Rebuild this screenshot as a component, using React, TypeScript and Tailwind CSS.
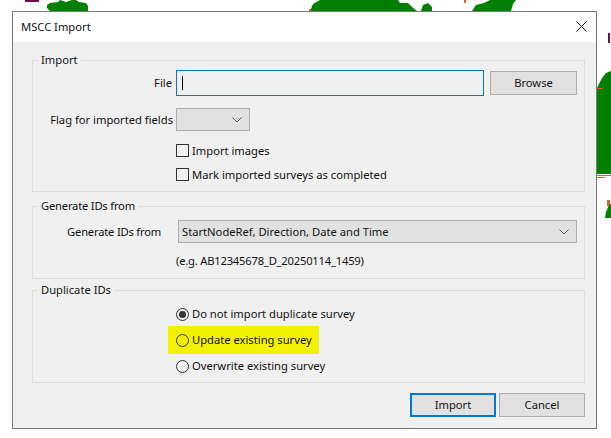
const fontStack = "font-['Noto_Sans','Open_Sans',sans-serif]";

function Chevron() {
  return (
    <svg width="10" height="6" viewBox="0 0 10 6" className="shrink-0">
      <polyline points="0.5,0.5 5,5 9.5,0.5" fill="none" stroke="#555555" strokeWidth="1" />
    </svg>
  );
}

function Checkbox({ label }: { label: string }) {
  return (
    <div className="flex h-[13px] items-center gap-[3px] pl-[143px]">
      <div className="h-[13px] w-[13px] border border-[#333333] bg-[#f0f0f0]" />
      <span>{label}</span>
    </div>
  );
}

function Radio({ label, checked }: { label: string; checked?: boolean }) {
  return (
    <div className="flex items-center gap-[3px] whitespace-nowrap">
      <div className="flex h-[13px] w-[13px] items-center justify-center rounded-full border border-[#333333]">
        {checked && <div className="h-[7px] w-[7px] rounded-full bg-[#333333]" />}
      </div>
      <span>{label}</span>
    </div>
  );
}

function Button({ label, primary, width }: { label: string; primary?: boolean; width: string }) {
  return (
    <button
      type="button"
      className={`h-[24px] bg-[#e1e1e1] text-[11.2px] text-[#111111] ${width} ${
        primary ? "border-2 border-[#0078d7]" : "border border-[#adadad]"
      }`}
    >
      {label}
    </button>
  );
}

function Group({ title, children, className }: { title: string; children: React.ReactNode; className: string }) {
  return (
    <fieldset className={`border border-[#dcdcdc] ${className}`}>
      <legend className="ml-[5px] px-[3px] leading-[16px]">{title}</legend>
      {children}
    </fieldset>
  );
}

export default function App() {
  return (
    <div className={`relative h-[438px] w-[611px] overflow-hidden bg-white pl-[12px] pt-[11px] text-[11.2px] leading-[16px] text-[#111111] ${fontStack}`}>
      {/* map behind the dialog */}
      <svg width="611" height="438" viewBox="0 0 611 438" className="absolute left-0 top-0">
        <rect x="25" y="0" width="14" height="2" fill="#7a0a4a" />
        <path d="M47 5 L50 3 L58 2 L60 0 L66 2 L72 0 L76 0 L79 2 L86 3 L88 6 L88 11 L50 11 L47 8 Z" fill="#008000" />
        <path d="M310 11 L313 4 L320 0 L398 0 L400 3 L408 3 L412 7 L417 11 Z" fill="#008000" />
        <path d="M421 11 L423 5 L428 3 L432 7 L432 11 Z" fill="#008000" />
        <path d="M472 11 L476 5 L484 3 L490 0 L516 0 L513 4 L511 11 Z" fill="#008000" />
        <path d="M464 0 h2 v3 h-2 Z M309 9 h2 v2 h-2 Z" fill="#e06020" />
        <path d="M608 33 h2 v10 h-2 Z" fill="#7a0a4a" />
        <path d="M597 88 L602 78 L606 73 L611 71 L611 174 L597 174 Z" fill="#008000" />
        <path d="M597 175 h14 v1 h-14 Z M597 177 h8 v1 h-8 Z" fill="#e06020" />
        <path d="M597 88 h6 v1 h-6 Z M607 200 h3 v6 h-3 Z" fill="#e06020" />
        <path d="M605 218 L606 212 L609 205 L611 204 L611 218 Z" fill="#008000" />
      </svg>

      <div className="relative flex h-[418px] w-[585px] flex-col border border-[#7a7a7a] bg-white">
        <div className="flex h-[30px] shrink-0 items-center justify-between pl-[8px] pr-[9px]">
          <span>MSCC Import</span>
          <svg width="11" height="11" viewBox="0 0 11 11" className="mb-px">
            <path d="M0.5 0.5 L10.5 10.5 M10.5 0.5 L0.5 10.5" stroke="#111111" strokeWidth="1" fill="none" />
          </svg>
        </div>

        <div className="flex flex-1 flex-col bg-[#f0f0f0] pl-[19px] pr-[11px] pt-[10px]">
          <Group title="Import" className="h-[140px]">
            <div className="mt-[2px] flex items-center">
              <div className="w-[139px] text-right">File</div>
              <div className="ml-[4px] flex h-[26px] w-[308px] items-center border border-[#0078d7] pl-[5px]">
                <div className="h-[14px] w-px bg-black" />
              </div>
              <div className="ml-[6px]">
                <Button label="Browse" width="w-[87px]" />
              </div>
            </div>
            <div className="mt-[12px] flex items-center">
              <div className="w-[140px] text-right">Flag for imported fields</div>
              <div className="ml-[3px] flex h-[23px] w-[74px] items-center justify-end border border-[#adadad] bg-[#e1e1e1] pr-[7px]">
                <Chevron />
              </div>
            </div>
            <div className="mt-[13px] flex flex-col gap-[11px]">
              <Checkbox label="Import images" />
              <Checkbox label="Mark imported surveys as completed" />
            </div>
          </Group>

          <Group title="Generate IDs from" className="mt-[6px] h-[81px] tracking-[-0.2px]">
            <div className="mt-[6px] flex items-center">
              <div className="w-[128px] text-right">Generate IDs from</div>
              <div className="ml-[17px] flex h-[23px] w-[399px] items-center justify-between border border-[#adadad] bg-[#e1e1e1] pl-[3px] pr-[7px] tracking-normal">
                <span>StartNodeRef, Direction, Date and Time</span>
                <Chevron />
              </div>
            </div>
            <div className="mt-[10px] pl-[143px]">(e.g. AB12345678_D_20250114_1459)</div>
          </Group>

          <Group title="Duplicate IDs" className="mt-[3px] h-[101px]">
            <div className="mt-[3px] flex flex-col pl-[135px]">
              <div className="flex h-[26px] items-center pl-[8px]">
                <Radio label="Do not import duplicate survey" checked />
              </div>
              <div className="-my-px flex h-[28px] w-[151px] items-center bg-[#f2f200] pl-[8px]">
                <Radio label="Update existing survey" />
              </div>
              <div className="flex h-[26px] items-center pl-[8px]">
                <Radio label="Overwrite existing survey" />
              </div>
            </div>
          </Group>

          <div className="mt-[10px] flex justify-end gap-[3px]">
            <Button label="Import" primary width="w-[86px]" />
            <Button label="Cancel" width="w-[86px]" />
          </div>
        </div>
      </div>
    </div>
  );
}
